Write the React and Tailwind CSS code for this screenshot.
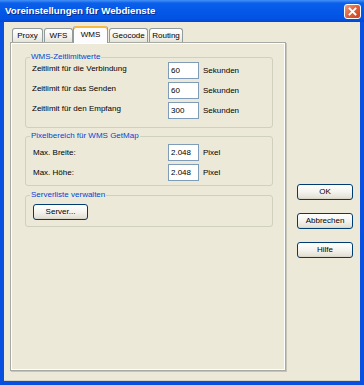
export default function App() {
  const tabBase =
    "flex items-center justify-center border border-b-0 border-[#919b9c] rounded-t-[3px] text-[8px] leading-none";
  const unsel =
    tabBase + " h-[14px] mb-[1px] bg-[linear-gradient(#ffffff,#f3f2ec_60%,#e6e4d8)]";
  const inputCls =
    "w-[31px] h-[17px] border border-[#7f9db9] bg-white pl-[2px] flex items-center text-[8px] leading-none";
  const btnCls =
    "flex items-center justify-center border border-[#003c74] rounded-[3px] bg-[linear-gradient(#ffffff,#f4f3ee_50%,#e4e1d6_90%,#d6d0c5)] text-[8px] leading-none text-black";
  const legendCls = "ml-[4px] px-[1px] text-[#0046d5] text-[8px] leading-[10px]";
  const fieldCls = "border border-[#d0d0bf] rounded-[3px] m-0 p-0";

  return (
    <div className="w-[364px] h-[385px] flex flex-col bg-[#0a50e0] font-['Liberation_Sans',Arial,sans-serif] text-black overflow-hidden">
      {/* Title bar */}
      <div className="h-[22px] shrink-0 flex items-center pl-[5px] pr-[3px] bg-[linear-gradient(#4592f8_0%,#0b5fea_14%,#0358e8_50%,#0252e3_85%,#0445d2_100%)]">
        <span className="text-white font-bold text-[9.7px] leading-none [text-shadow:1px_1px_0_#0b2b8a]">
          Voreinstellungen für Webdienste
        </span>
        <div className="ml-auto w-[17px] h-[15px] rounded-[3px] border border-white bg-[linear-gradient(135deg,#f09a7c,#e0603a_50%,#c8401a)] flex items-center justify-center">
          <svg width="9" height="9" viewBox="0 0 9 9">
            <path d="M1.5 1.5 L7.5 7.5 M7.5 1.5 L1.5 7.5" stroke="white" strokeWidth="1.8" strokeLinecap="square" />
          </svg>
        </div>
      </div>

      {/* Body */}
      <div className="flex-1 mx-[4px] mb-[4px] bg-[#ece9d8] flex border-b border-[#d6d2c2]">
        {/* Left column: tabs + panel */}
        <div className="pl-[6px] pt-[4px] w-[282px] flex flex-col">
          <div className="relative z-10 flex items-end h-[17px] pl-[2px] -mb-[1px]">
            <div className={unsel + " w-[31px]"}>Proxy</div>
            <div className={unsel + " w-[29px] ml-[1px]"}>WFS</div>
            <div className={tabBase + " w-[35px] h-[17px] bg-[#fcfcfe] border-t-0 shadow-[inset_0_2px_0_#f8b940] pt-[1px]"}>
              WMS
            </div>
            <div className={unsel + " w-[39px] ml-[1px]"}>Geocode</div>
            <div className={unsel + " w-[34px] ml-[1px]"}>Routing</div>
          </div>
          <div className="w-[276px] h-[329px] border border-[#a7a9a4] shadow-[inset_1px_1px_0_#ffffff,inset_-1px_-1px_0_#ffffff,1px_1px_0_#c7c4b8] bg-[#ece9d8] pt-[9px] pl-[14px] pr-[12px] flex flex-col">
            {/* Group 1 */}
            <fieldset className={fieldCls + " pb-[8px]"}>
              <legend className={legendCls}>WMS-Zeitlimitwerte</legend>
              <div className="flex flex-col gap-[3px]">
                {[
                  ["Zeitlimit für die Verbindung", "60"],
                  ["Zeitlimit für das Senden", "60"],
                  ["Zeitlimit für den Empfang", "300"],
                ].map(([l, v]) => (
                  <div key={l} className="flex items-center h-[17px]">
                    <span className="w-[142px] pl-[6px] text-[8px] leading-none -mt-[4px]">{l}</span>
                    <div className={inputCls}>{v}</div>
                    <span className="ml-[4px] text-[8px] leading-none">Sekunden</span>
                  </div>
                ))}
              </div>
            </fieldset>

            {/* Group 2 */}
            <fieldset className={fieldCls + " mt-[3px] pt-[3px] pb-[4px]"}>
              <legend className={legendCls}>Pixelbereich für WMS GetMap</legend>
              <div className="flex flex-col gap-[3px]">
                {["Max. Breite:", "Max. Höhe:"].map((l) => (
                  <div key={l} className="flex items-center h-[17px]">
                    <span className="w-[142px] pl-[7px] text-[8px] leading-none">{l}</span>
                    <div className={inputCls}>2.048</div>
                    <span className="ml-[4px] text-[8px] leading-none">Pixel</span>
                  </div>
                ))}
              </div>
            </fieldset>

            {/* Group 3 */}
            <fieldset className={fieldCls + " mt-[4px] pt-[4px] pb-[6px]"}>
              <legend className={legendCls}>Serverliste verwalten</legend>
              <div className="pl-[7px]">
                <div className={btnCls + " w-[55px] h-[16px]"}>Server...</div>
              </div>
            </fieldset>
          </div>
        </div>

        {/* Right column: buttons */}
        <div className="ml-[11px] pt-[162px] flex flex-col gap-[13px]">
          <div className={btnCls + " w-[56px] h-[16px]"}>OK</div>
          <div className={btnCls + " w-[56px] h-[16px]"}>Abbrechen</div>
          <div className={btnCls + " w-[56px] h-[16px]"}>Hilfe</div>
        </div>
      </div>
    </div>
  );
}
